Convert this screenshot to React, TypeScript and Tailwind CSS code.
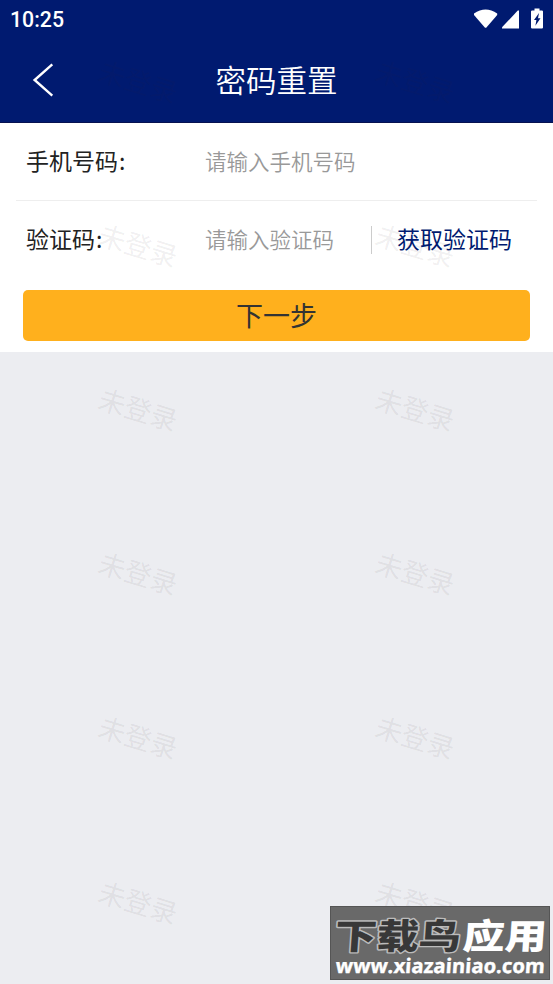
import type { ReactNode } from "react"

const marks = Array.from({ length: 12 }, (_, i) => i)

function StatusBar() {
  return (
    <div className="flex h-[37px] items-center justify-between pr-[10px] pl-[10px]">
      <span className="pt-[2px] font-[Roboto,sans-serif] text-[21.3px] leading-none font-medium">
        10:25
      </span>
      <svg width="72" height="24" viewBox="0 0 72 24" fill="currentColor">
        <path d="M3 6.5Q14.6-1.3 26.2 6.5V8L15.2 20.7H14L3 8z" />
        <path d="M48 3.4V21.5H31v-1.2L46.8 3.4z" />
        <path
          fillRule="evenodd"
          d="M63.5 1.5h5v1.9h2.4q1.1 0 1.1 1.1v15.9q0 1.1-1.1 1.1h-9.8Q60 21.5 60 20.4V4.5q0-1.1 1.1-1.1h2.4zM68 6l-5 6.9h2.4L64.4 18.8 69.5 11.2H67z"
        />
      </svg>
    </div>
  )
}

function Header() {
  return (
    <header className="h-[123px] border-b border-[#071250] bg-[#001a70] text-white">
      <StatusBar />
      <div className="grid h-[86px] grid-cols-[90px_1fr_90px] items-center">
        <svg
          className="ml-[32px]"
          width="22"
          height="34"
          viewBox="0 0 22 34"
          fill="none"
          stroke="currentColor"
          strokeWidth="2.4"
        >
          <path d="M20.3 1.4 2.6 17l17.7 15.6" />
        </svg>
        <h1 className="pb-px text-center text-[30.5px] leading-none font-[350]">
          密码重置
        </h1>
      </div>
    </header>
  )
}

function Row({
  label,
  hint,
  children,
}: {
  label: string
  hint: string
  children?: ReactNode
}) {
  return (
    <div className="flex h-full items-center pl-[10px] text-[21.5px] leading-none">
      <span className="w-[179px] pb-[3px] text-[23px] text-[#222]">
        {label}
        <span className="pl-px">:</span>
      </span>
      <span className="w-[166px] pb-[2px] font-[350] text-[#999]">{hint}</span>
      {children}
    </div>
  )
}

function Watermark() {
  return (
    <div className="pointer-events-none absolute inset-0 grid auto-rows-[164.1px] grid-cols-2 overflow-hidden">
      {marks.map((i) => (
        <div key={i} className="flex items-center justify-center pb-[3px] pl-px">
          <span className="rotate-[17deg] text-[27px] leading-none text-[#302030]/8">
            未登录
          </span>
        </div>
      ))}
    </div>
  )
}

function SiteBadge() {
  return (
    <div className="absolute top-[906px] left-[330px] h-[74px] w-[220px] border border-[#555] bg-[#696969]">
      <svg width="218" height="72" viewBox="0 0 218 72" fontWeight="900">
        <g
          fontFamily="Noto Sans CJK SC, sans-serif"
          fontSize="35"
          paintOrder="stroke"
          strokeLinejoin="round"
          transform="skewX(-4)"
        >
          <text
            x="6"
            y="42"
            fill="#383838"
            stroke="#bbb"
            strokeWidth="2.8"
            textLength="126"
            lengthAdjust="spacingAndGlyphs"
          >
            下载鸟
          </text>
          <text
            x="134"
            y="42"
            fill="#fff"
            textLength="84"
            lengthAdjust="spacingAndGlyphs"
          >
            应用
          </text>
        </g>
        <text
          x="9"
          y="66"
          fill="#fff"
          stroke="#fff"
          strokeWidth="0.4"
          fontFamily="Open Sans, sans-serif"
          fontSize="20"
          fontWeight="700"
          textLength="209"
          lengthAdjust="spacingAndGlyphs"
          transform="skewX(-4)"
        >
          www.xiazainiao.com
        </text>
      </svg>
    </div>
  )
}

export default function App() {
  return (
    <div className="relative h-[984px] w-full overflow-hidden bg-[#ecedf1] font-['Noto_Sans_CJK_SC',sans-serif]">
      <Header />
      <main className="h-[229px] bg-white">
        <div className="mx-4 h-[78px] border-b border-[#eee]">
          <Row label="手机号码" hint="请输入手机号码" />
        </div>
        <div className="mx-4 h-[78px]">
          <Row label="验证码" hint="请输入验证码">
            <span className="h-[28px] w-px bg-[#ccc]" />
            <span className="relative z-10 pb-[3px] pl-[25px] text-[23px] text-[#001a70]">
              获取验证码
            </span>
          </Row>
        </div>
        <button className="mx-[23px] mt-[11px] flex h-[51px] w-[507px] items-center justify-center rounded-[5px] bg-[#ffb01d] pb-[2px] text-[27px] leading-none text-[#333]">
          下一步
        </button>
      </main>
      <Watermark />
      <SiteBadge />
    </div>
  )
}
